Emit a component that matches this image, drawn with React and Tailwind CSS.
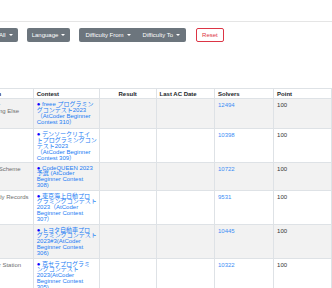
const rows = [
  {
    problem: ["Order", "Something Else"],
    contest: ["freee プログラミン", "グコンテスト2023", "（AtCoder Beginner", "Contest 310）"],
    solvers: "12494",
    h: "h-[30px]",
    bg: "bg-[#f2f2f2]",
  },
  {
    problem: ["Nine"],
    contest: ["デンソークリエイ", "トプログラミングコン", "テスト2023", "（AtCoder Beginner", "Contest 309）"],
    solvers: "10398",
    h: "h-[33px]",
    bg: "bg-white",
  },
  {
    problem: ["New Scheme"],
    contest: ["CodeQUEEN 2023", "予選 (AtCoder", "Beginner Contest", "308)"],
    solvers: "10722",
    h: "h-[28px]",
    bg: "bg-[#f2f2f2]",
  },
  {
    problem: ["Weekly Records"],
    contest: ["東京海上日動プロ", "グラミングコンテスト", "2023（AtCoder", "Beginner Contest", "307）"],
    solvers: "9531",
    h: "h-[34px]",
    bg: "bg-white",
  },
  {
    problem: ["Echo"],
    contest: ["トヨタ自動車プロ", "グラミングコンテスト", "2023#3(AtCoder", "Beginner Contest", "306)"],
    solvers: "10445",
    h: "h-[34px]",
    bg: "bg-[#f2f2f2]",
  },
  {
    problem: ["Water Station"],
    contest: ["京セラプログラミ", "ングコンテスト", "2023(AtCoder", "Beginner Contest", "305)"],
    solvers: "10322",
    h: "h-[34px]",
    bg: "bg-white",
  },
];

function Caret() {
  return (
    <span className="inline-block ml-[3px] align-middle border-t-[2px] border-t-white border-x-[2px] border-x-transparent" />
  );
}

function App() {
  return (
    <div className="w-[332px] h-[288px] overflow-hidden bg-white text-[6px] font-['Liberation_Sans','Noto_Sans_CJK_JP',sans-serif] text-[#212529]">
      <div className="h-[22px] border-b border-[#e5e5e5]" />

      {/* FILTERS */}
      <div className="flex items-center gap-[9px] mt-[6px] -ml-[6px]">
        <button className="h-[14px] px-[5px] rounded-[2px] bg-[#6c757d] text-white leading-none">
          All
          <Caret />
        </button>
        <button className="h-[14px] px-[5px] rounded-[2px] bg-[#6c757d] text-white leading-none">
          Language
          <Caret />
        </button>
        <div className="flex h-[14px] rounded-[2px] bg-[#6c757d] text-white">
          <button className="px-[6px] leading-none">
            Difficulty From
            <Caret />
          </button>
          <button className="px-[6px] leading-none">
            Difficulty To
            <Caret />
          </button>
        </div>
        <button className="h-[14px] px-[5px] ml-[1px] rounded-[2px] border border-[#dc3545] text-[#dc3545] leading-none">
          Reset
        </button>
      </div>

      {/* TABLE */}
      <table className="mt-[46px] -ml-[27px] border-collapse table-fixed leading-[5.9px]">
        <colgroup>
          <col className="w-[60px]" />
          <col className="w-[66px]" />
          <col className="w-[63px]" />
          <col className="w-[66px]" />
          <col className="w-[65px]" />
          <col className="w-[65px]" />
        </colgroup>
        <thead>
          <tr className="h-[10px] font-bold text-left leading-[6px]">
            <th className="border border-[#dee2e6] px-[3px]">Problem</th>
            <th className="border border-[#dee2e6] px-[3px]">Contest</th>
            <th className="border border-[#dee2e6] px-[3px] text-center">Result</th>
            <th className="border border-[#dee2e6] px-[3px]">Last AC Date</th>
            <th className="border border-[#dee2e6] px-[3px]">Solvers</th>
            <th className="border border-[#dee2e6] px-[3px]">Point</th>
          </tr>
        </thead>
        <tbody>
          {rows.map((r) => (
            <tr key={r.solvers} className={`${r.h} ${r.bg} align-top`}>
              <td className="border border-[#dee2e6] px-[3px] pt-[4px] text-[#6f6f6f] whitespace-nowrap">
                {r.problem.map((line, i) => (
                  <div key={line} className={i === 0 ? "flex items-center" : ""}>
                    {i === 0 && (
                      <span className="inline-block w-[5px] h-[5px] mr-[3px] rounded-full border border-[#808080]" />
                    )}
                    {line}
                  </div>
                ))}
              </td>
              <td className="border border-[#dee2e6] pl-[3px] pr-[2px] pt-[3px] text-[#1a7cf4] whitespace-nowrap">
                {r.contest.map((line, i) => (
                  <div key={line}>
                    {i === 0 && <span className="text-[#0000ff]">● </span>}
                    {line}
                  </div>
                ))}
              </td>
              <td className="border border-[#dee2e6]" />
              <td className="border border-[#dee2e6]" />
              <td className="border border-[#dee2e6] px-[3px] pt-[4px] text-[#3d8ef5]">
                {r.solvers}
              </td>
              <td className="border border-[#dee2e6] px-[3px] pt-[4px] text-[#333]">
                100
              </td>
            </tr>
          ))}
        </tbody>
      </table>
    </div>
  );
}

export default App;
